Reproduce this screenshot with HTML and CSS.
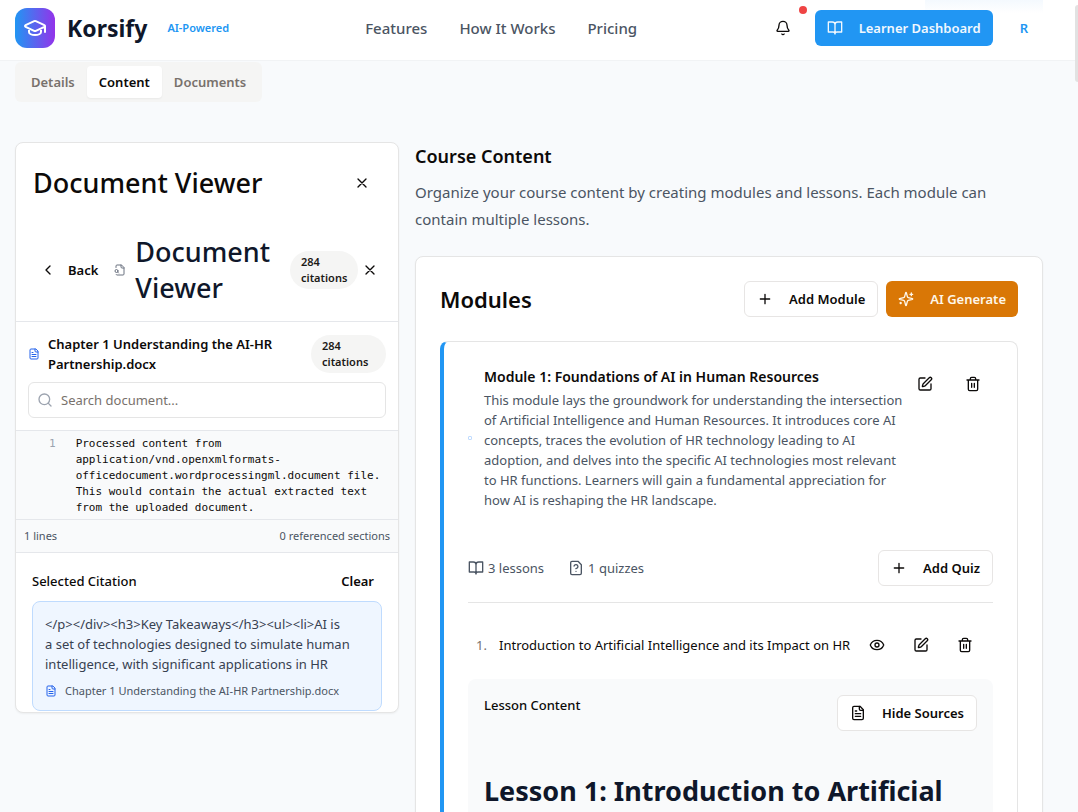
FILE: index.html
```html
<!DOCTYPE html>
<html lang="en">
<head>
<meta charset="utf-8">
<meta name="viewport" content="width=device-width, initial-scale=1">
<title>Korsify</title>
<link rel="stylesheet" href="styles.css">
</head>
<body>
<svg class="defs" aria-hidden="true">
  <symbol id="x" viewBox="0 0 24 24"><path d="M18 6 6 18M6 6l12 12"/></symbol>
  <symbol id="plus" viewBox="0 0 24 24"><path d="M5 12h14M12 5v14"/></symbol>
  <symbol id="book" viewBox="0 0 24 24"><path d="M2 3h6a4 4 0 0 1 4 4v14a3 3 0 0 0-3-3H2zM22 3h-6a4 4 0 0 0-4 4v14a3 3 0 0 1 3-3h7z"/></symbol>
  <symbol id="file" viewBox="0 0 24 24"><path d="M15 2H6a2 2 0 0 0-2 2v16a2 2 0 0 0 2 2h12a2 2 0 0 0 2-2V7Z"/><path d="M14 2v4a2 2 0 0 0 2 2h4M10 9H8M16 13H8M16 17H8"/></symbol>
  <symbol id="edit" viewBox="0 0 24 24"><path d="M12 3H5a2 2 0 0 0-2 2v14a2 2 0 0 0 2 2h14a2 2 0 0 0 2-2v-7"/><path d="M18.375 2.625a1 1 0 0 1 3 3l-9.013 9.014a2 2 0 0 1-.853.505l-2.873.84a.5.5 0 0 1-.62-.62l.84-2.873a2 2 0 0 1 .506-.852z"/></symbol>
  <symbol id="trash" viewBox="0 0 24 24"><path d="M3 6h18M19 6v14c0 1-1 2-2 2H7c-1 0-2-1-2-2V6M8 6V4c0-1 1-2 2-2h4c1 0 2 1 2 2v2M10 11v6M14 11v6"/></symbol>
</svg>
<header class="topbar">
  <a class="brand" href="#">
    <span class="logo"><svg class="icon logo-icon" viewBox="0 0 24 24"><path d="M21.42 10.922a1 1 0 0 0-.019-1.838L12.83 5.18a2 2 0 0 0-1.66 0L2.6 9.08a1 1 0 0 0 0 1.832l8.57 3.908a2 2 0 0 0 1.66 0zM22 10v6M6 12.5V16a6 3 0 0 0 12 0v-3.5"/></svg></span>
    <span class="brand-name">Korsify</span>
    <span class="brand-tag">AI-Powered</span>
  </a>
  <nav class="nav">
    <a href="#">Features</a>
    <a href="#">How It Works</a>
    <a href="#">Pricing</a>
  </nav>
  <div class="account">
    <button class="bell" aria-label="Notifications"><svg class="icon" viewBox="0 0 24 24"><path d="M10.268 21a2 2 0 0 0 3.464 0M3.262 15.326A1 1 0 0 0 4 17h16a1 1 0 0 0 .74-1.673C19.41 13.956 18 12.499 18 8A6 6 0 0 0 6 8c0 4.499-1.411 5.956-2.738 7.326"/></svg><span class="bell-dot"></span></button>
    <button class="btn btn-blue"><svg class="icon"><use href="#book"/></svg>Learner Dashboard</button>
    <button class="avatar">R</button>
  </div>
</header>
<div class="tabs" role="tablist">
  <button class="tab" role="tab">Details</button>
  <button class="tab tab-active" role="tab" aria-selected="true">Content</button>
  <button class="tab" role="tab">Documents</button>
</div>
<main class="columns">
  <aside class="card viewer">
    <div class="viewer-title">
      <h2>Document Viewer</h2>
      <button class="icon-btn" aria-label="Close"><svg class="icon"><use href="#x"/></svg></button>
    </div>
    <div class="viewer-sub">
      <button class="back"><svg class="icon" viewBox="0 0 24 24"><path d="m15 18-6-6 6-6"/></svg>Back</button>
      <svg class="icon icon-sm muted" viewBox="0 0 24 24"><path d="M14 2v4a2 2 0 0 0 2 2h4M4.268 21a2 2 0 0 0 1.727 1H18a2 2 0 0 0 2-2V7l-5-5H6a2 2 0 0 0-2 2v3M9 18l-1.500-1.500"/><circle cx="5" cy="14" r="3"/></svg>
      <h2>Document Viewer</h2>
      <span class="badge">284 citations</span>
      <button class="icon-btn icon-btn-tight" aria-label="Close document"><svg class="icon"><use href="#x"/></svg></button>
    </div>
    <div class="file-area">
      <div class="file-head">
        <svg class="icon icon-sm blue"><use href="#file"/></svg>
        <h3>Chapter 1 Understanding the AI-HR Partnership.docx</h3>
        <span class="badge badge-wide">284 citations</span>
      </div>
      <label class="search">
        <svg class="icon" viewBox="0 0 24 24"><circle cx="11" cy="11" r="8"/><path d="m21 21-4.300-4.300"/></svg>
        <input type="text" placeholder="Search document..." aria-label="Search document">
      </label>
    </div>
    <div class="code">
      <span class="line-no">1</span>
      <p>Processed content from application/vnd.openxmlformats-officedocument.wordprocessingml.document file. This would contain the actual extracted text from the uploaded document.</p>
    </div>
    <div class="stats"><span>1 lines</span><span>0 referenced sections</span></div>
    <section class="citation">
      <div class="citation-head"><h4>Selected Citation</h4><button class="clear">Clear</button></div>
      <div class="citation-box">
        <p>&lt;/p&gt;&lt;/div&gt;&lt;h3&gt;Key Takeaways&lt;/h3&gt;&lt;ul&gt;&lt;li&gt;AI is<br>a set of technologies designed to simulate human intelligence, with significant applications in HR</p>
        <div class="source"><svg class="icon icon-sm blue"><use href="#file"/></svg>Chapter 1 Understanding the AI-HR Partnership.docx</div>
      </div>
    </section>
  </aside>
  <section class="course">
    <h1 class="course-title">Course Content</h1>
    <p class="course-lead">Organize your course content by creating modules and lessons. Each module can contain multiple lessons.</p>
    <div class="card modules">
      <div class="modules-head">
        <h2>Modules</h2>
        <button class="btn btn-outline"><svg class="icon"><use href="#plus"/></svg>Add Module</button>
        <button class="btn btn-amber"><svg class="icon" viewBox="0 0 24 24"><path d="M9.937 15.500A2 2 0 0 0 8.500 14.063l-6.135-1.582a.5.5 0 0 1 0-.962L8.500 9.936A2 2 0 0 0 9.937 8.500l1.582-6.135a.5.5 0 0 1 .963 0L14.063 8.500A2 2 0 0 0 15.500 9.937l6.135 1.581a.5.5 0 0 1 0 .964L15.500 14.063a2 2 0 0 0-1.437 1.437l-1.582 6.135a.5.5 0 0 1-.963 0zM20 3v4M22 5h-4M4 17v2M5 18H3"/></svg>AI Generate</button>
      </div>
      <article class="module">
        <div class="module-head">
          <span class="grip"></span>
          <div class="module-text">
            <h3>Module 1: Foundations of AI in Human Resources</h3>
            <p>This module lays the groundwork for understanding the intersection of Artificial Intelligence and Human Resources. It introduces core AI concepts, traces the evolution of HR technology leading to AI adoption, and delves into the specific AI technologies most relevant to HR functions. Learners will gain a fundamental appreciation for how AI is reshaping the HR landscape.</p>
          </div>
          <div class="module-actions">
            <button class="icon-btn" aria-label="Edit module"><svg class="icon"><use href="#edit"/></svg></button>
            <button class="icon-btn" aria-label="Delete module"><svg class="icon"><use href="#trash"/></svg></button>
          </div>
        </div>
        <div class="module-meta">
          <span class="meta"><svg class="icon"><use href="#book"/></svg>3 lessons</span>
          <span class="meta"><svg class="icon" viewBox="0 0 24 24"><path d="M15 2H6a2 2 0 0 0-2 2v16a2 2 0 0 0 2 2h12a2 2 0 0 0 2-2V7ZM12 17h.01M9.100 9a3 3 0 0 1 5.820 1c0 2-3 3-3 3"/></svg>1 quizzes</span>
          <button class="btn btn-outline"><svg class="icon"><use href="#plus"/></svg>Add Quiz</button>
        </div>
        <div class="lesson-row">
          <span class="lesson-no">1.</span>
          <span class="lesson-name">Introduction to Artificial Intelligence and its Impact on HR</span>
          <button class="icon-btn" aria-label="View lesson"><svg class="icon" viewBox="0 0 24 24"><path d="M2.062 12.348a1 1 0 0 1 0-.696 10.750 10.750 0 0 1 19.876 0 1 1 0 0 1 0 .696 10.750 10.750 0 0 1-19.876 0"/><circle cx="12" cy="12" r="3"/></svg></button>
          <button class="icon-btn" aria-label="Edit lesson"><svg class="icon"><use href="#edit"/></svg></button>
          <button class="icon-btn" aria-label="Delete lesson"><svg class="icon"><use href="#trash"/></svg></button>
        </div>
        <div class="lesson-box">
          <div class="lesson-head">
            <h4>Lesson Content</h4>
            <button class="btn btn-outline"><svg class="icon"><use href="#file"/></svg>Hide Sources</button>
          </div>
          <h2 class="lesson-title">Lesson 1: Introduction to Artificial</h2>
        </div>
      </article>
    </div>
  </section>
</main>
<div class="scrollbar"></div>
</body>
</html>
```
FILE: styles.css
```css
* { box-sizing: border-box; margin: 0; }
body {
  height: 100vh;
  overflow: hidden;
  background: #f8fafc;
  color: #0c0a09;
  font: 13px/20px "Noto Sans", "Open Sans", sans-serif;
}
button, input { font: inherit; color: inherit; }
button { border: 0; background: none; padding: 0; cursor: pointer; }
a { color: inherit; text-decoration: none; }
h1, h2, h3, h4 { font-weight: 600; }
.defs { display: none; }
.icon {
  width: 16px; height: 16px; flex: none;
  fill: none; stroke: currentColor; stroke-width: 2;
  stroke-linecap: round; stroke-linejoin: round;
}
.icon-sm { width: 12px; height: 12px; }
.muted { color: #6b7280; }
.blue { color: #2563eb; }

.topbar {
  height: 61px; padding: 0 50px 5px 15px;
  display: flex; align-items: center;
  background: linear-gradient(#f4f9fe, #fff) right 35px top / 118px 13px no-repeat #fff;
  border-bottom: 1px solid #f1f3f5;
}
.brand { display: flex; align-items: center; }
.logo {
  width: 40px; height: 40px; margin-right: 12px; border-radius: 12px;
  display: grid; place-items: center; color: #fff;
  background: linear-gradient(90deg, #2196f3, #9333ea);
}
.logo-icon { width: 24px; height: 24px; }
.brand-name { font-size: 23px; line-height: 32px; font-weight: 700; color: #0f172a; }
.brand-tag { margin-left: 20px; font-size: 11px; font-weight: 600; color: #2196f3; }
.nav { display: flex; gap: 32px; margin-left: 136px; font-size: 15px; font-weight: 500; color: #4b5563; }
.account { display: flex; align-items: center; margin-left: auto; }
.bell { position: relative; display: flex; margin-right: 24px; }
.bell-dot { position: absolute; top: -14px; right: -16px; width: 8px; height: 8px; border-radius: 50%; background: #ef4444; }
.avatar { margin-left: 27px; font-weight: 600; color: #2196f3; }

.btn {
  height: 36px; padding: 0 12px; border-radius: 6px; flex: none;
  display: flex; align-items: center; gap: 16px; font-weight: 600;
}
.btn-blue { background: #2196f3; color: #f1f8fe; }
.btn-amber { background: #d97706; color: #fef7ea; }
.btn-outline { border: 1px solid #e7e5e4; background: #fff; }

.tabs {
  width: fit-content; margin: 1px 0 0 15px; padding: 4px; border-radius: 6px;
  display: flex; background: #f5f5f4; color: #78716c;
}
.tab { height: 32px; padding: 0 12px; border-radius: 4px; font-weight: 600; }
.tab-active { background: #fff; color: #0c0a09; box-shadow: 0 1px 2px #0000000d; }

.columns {
  margin: 40px 35px 0 15px;
  display: grid; grid-template-columns: 384fr 628fr; gap: 16px; align-items: start;
}
.card { background: #fff; border: 1px solid #e5e5e5; border-radius: 8px; box-shadow: 0 1px 2px #0000000d; }
.icon-btn { display: grid; place-items: center; width: 40px; height: 36px; flex: none; }

.viewer h2 { font-size: 27px; line-height: 36px; font-weight: 500; }
.viewer-title { display: flex; justify-content: space-between; align-items: center; padding: 22px 16px 33px 17px; }
.viewer-sub {
  display: flex; align-items: center; padding: 0 16px 15px 24px;
  border-bottom: 1px solid #e5e7eb; color: #0f172a;
}
.viewer-sub h2 { margin: 0 8px 0 9px; flex: 1; }
.back { display: flex; align-items: center; gap: 12px; margin-right: 16px; font-weight: 600; color: #0c0a09; }
.badge {
  width: 68px; padding: 3px 11px; border-radius: 20px; flex: none;
  background: #f5f5f4; color: #1c1917; font-size: 11px; line-height: 16px; font-weight: 600;
}
.badge-wide { width: 75px; }
.icon-btn-tight { width: 24px; color: #0c0a09; }
.file-area { padding: 12px; }
.file-head { display: flex; align-items: center; gap: 8px; height: 40px; }
.file-head h3 { flex: 1; font-size: 13px; }
.search {
  display: flex; align-items: center; gap: 8px; height: 36px; margin-top: 8px; padding: 0 8px;
  border: 1px solid #e5e5e5; border-radius: 6px; color: #9ca3af;
}
.search input { flex: 1; min-width: 0; border: 0; outline: 0; padding: 0; background: none; color: #0c0a09; }
.search input::placeholder { color: #78716c; opacity: 1; }
.code {
  display: flex; gap: 20px; padding: 5px 8px 3px 33px;
  border: solid #e5e7eb; border-width: 1px 0; background: #f9fafb;
  font: 11px/16px "DejaVu Sans Mono", monospace;
}
.line-no { color: #9ca3af; }
.stats {
  display: flex; justify-content: space-between; padding: 6px 8px;
  border-bottom: 1px solid #e5e7eb; background: #f9fafb; color: #4b5563; font-size: 11px;
}
.citation { padding: 18px 16px 1px; }
.citation-head { display: flex; justify-content: space-between; padding-right: 8px; }
.citation h4 { font-size: 13px; font-weight: 500; }
.clear { font-weight: 600; }
.citation-box {
  margin-top: 10px; padding: 12px 10px 9px 12px;
  border: 1px solid #bfdbfe; border-radius: 8px; background: #eff6ff; color: #374151;
}
.source { display: flex; align-items: center; gap: 8px; margin-top: 7px; font-size: 11px; color: #4b5563; }

.course-title { font-size: 18px; line-height: 28px; }
.course-lead { margin-top: 9px; padding-right: 16px; font-size: 15px; line-height: 27px; color: #4b5563; }
.modules { margin-top: 23px; padding: 24px; }
.modules-head { display: flex; align-items: center; gap: 8px; }
.modules-head h2 { flex: 1; font-size: 22px; line-height: 32px; }
.module {
  margin-top: 24px; padding: 24px;
  border: 1px solid #e5e5e5; border-left: 4px solid #2196f3; border-radius: 8px;
}
.module-head { display: flex; align-items: flex-start; }
.grip { width: 4px; height: 4px; margin-right: 12px; align-self: center; border: 1px solid #bfdbfe; border-radius: 1px; }
.module-text { flex: 1; }
.module-text h3 { font-size: 14px; line-height: 22px; }
.module-text p { margin-top: 2px; color: #4b5563; }
.module-actions { display: flex; gap: 8px; }
.module-meta {
  display: flex; align-items: center; gap: 24px; margin-top: 40px; padding-bottom: 16px;
  border-bottom: 1px solid #e5e5e5; color: #4b5563;
}
.module-meta .btn { margin-left: auto; color: #0c0a09; }
.meta { display: flex; align-items: center; gap: 4px; }
.lesson-row { display: flex; align-items: center; margin-top: 24px; padding: 0 8px; gap: 4px; }
.lesson-no { width: 19px; color: #78716c; }
.lesson-name { flex: 1; }
.lesson-box { margin-top: 16px; padding: 16px; border-radius: 8px; background: #f9fafb; }
.lesson-head { display: flex; align-items: flex-start; justify-content: space-between; }
.lesson-head h4 { font-size: 13px; font-weight: 500; }
.lesson-title { margin-top: 40px; font-size: 27px; line-height: 40px; font-weight: 700; color: #0f172a; }
.scrollbar { position: fixed; top: 5px; right: 0; width: 3px; height: 77px; border-radius: 3px 0 0 3px; background: #e2e2e2; }
```
